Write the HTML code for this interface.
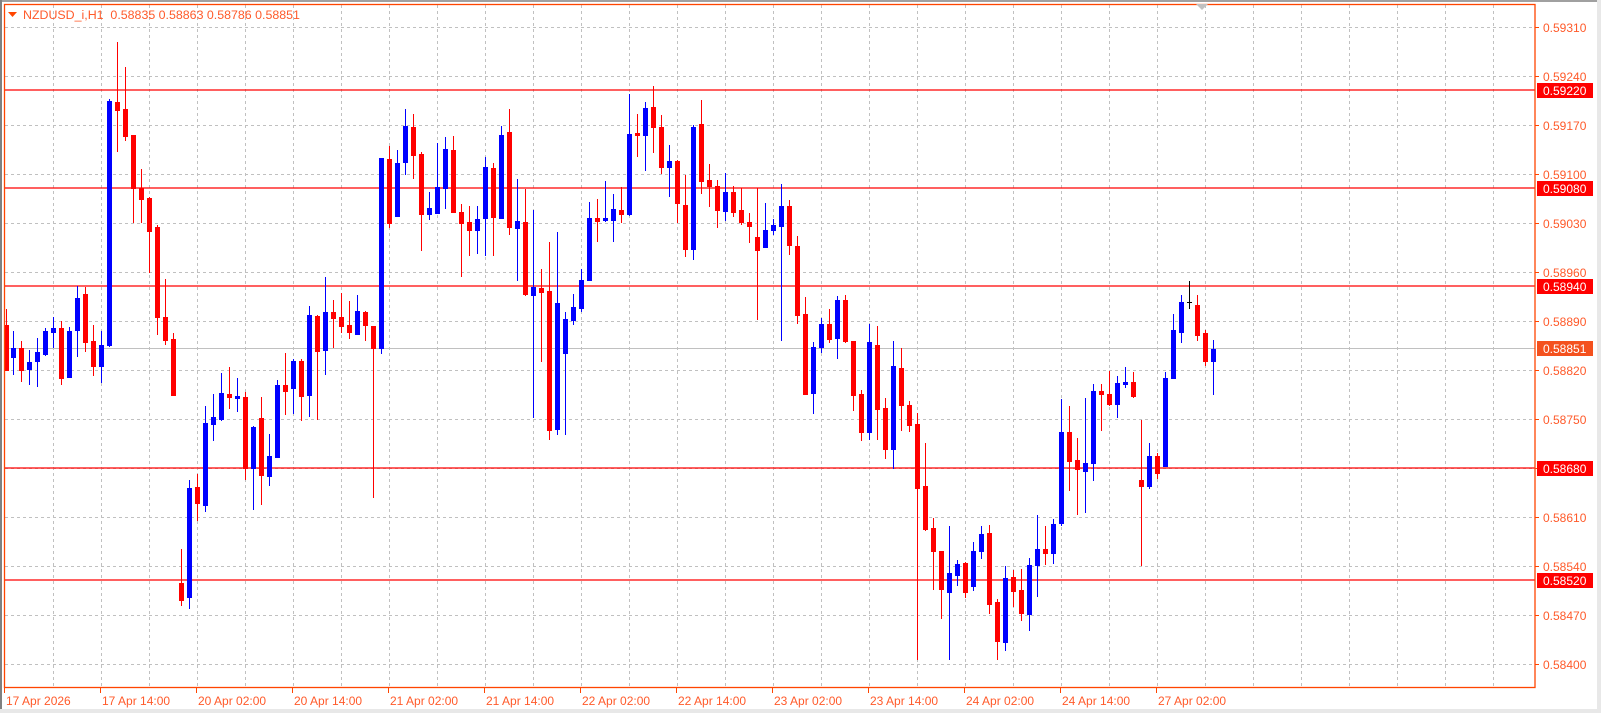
<!DOCTYPE html>
<html><head><meta charset="utf-8"><style>
html,body{margin:0;padding:0;background:#fff;width:1601px;height:713px;overflow:hidden}
svg{display:block}
text{font-family:"Liberation Sans",sans-serif;font-size:12px}
.hdr{white-space:pre;font-size:12.4px}
</style></head><body>
<svg id="c" width="1601" height="713" xmlns="http://www.w3.org/2000/svg">
<rect x="0" y="0" width="1601" height="713" fill="#fff"/>
<rect x="0" y="0" width="1601" height="2" fill="#a0a0a0"/>
<rect x="0" y="0" width="2" height="713" fill="#808080"/>
<rect x="1597" y="0" width="4" height="713" fill="#e8e8e8"/>
<rect x="0" y="709" width="1601" height="4" fill="#e8e8e8"/>
<g id="grid" stroke="#c0c0c0" stroke-width="1" stroke-dasharray="3,3"></g>
<line x1="5" y1="348.5" x2="1535" y2="348.5" stroke="#c0c0c0"/>
<g stroke="#ff0000" stroke-width="1.2">
<line x1="5" y1="90" x2="1535" y2="90"/>
<line x1="5" y1="188" x2="1535" y2="188"/>
<line x1="5" y1="286" x2="1535" y2="286"/>
<line x1="5" y1="468" x2="1535" y2="468"/>
<line x1="5" y1="580" x2="1535" y2="580"/>
</g>
<g id="candles"></g>
<rect x="4.5" y="4.5" width="1530.5" height="683" fill="none" stroke="#ff4500" stroke-width="1.3"/>
<polygon points="1196,4 1208,4 1202,10" fill="#c0c0c0"/>
<polygon points="8,12 17,12 12.5,17" fill="#ff4500"/>
<text class="hdr" x="23" y="19" fill="#ff5a2a" xml:space="preserve">NZDUSD_i,H1  0.58835 0.58863 0.58786 0.58851</text>
<g id="raxis" fill="#ff5a2a"></g>
<g id="baxis" fill="#ff5a2a"></g>
</svg>
<script>
var NS="http://www.w3.org/2000/svg";
function el(t,a,p,txt){var e=document.createElementNS(NS,t);for(var k in a)e.setAttribute(k,a[k]);if(txt)e.textContent=txt;p.appendChild(e);return e;}
var g=document.getElementById("grid");
for(var k=0;k<14;k++){var y=27+49*k+0.5;el("line",{x1:5,y1:y,x2:1535,y2:y},g);}
for(var k=0;k<=30;k++){var x=53+48*k+0.5;el("line",{x1:x,y1:5,x2:x,y2:687},g);}
var D=[
[6,309,370,325,370,'R'],[13,331,375,348,357,'B'],[21,341,382,348,370,'R'],[29,350,385,362,369,'B'],[37,338,387,352,361,'B'],[45,328,356,331,354,'B'],[53,317,348,328,332,'B'],[61,321,385,328,378,'R'],[69,327,377,331,377,'B'],[77,286,357,298,330,'B'],[85,287,352,294,342,'R'],[93,325,376,341,366,'R'],[101,331,383,345,366,'B'],[109,99,347,101,345,'B'],[117,42,152,102,110,'R'],[125,67,141,109,136,'R'],[133,135,223,135,188,'R'],[141,169,223,188,199,'R'],[149,197,273,198,231,'R'],[157,225,335,227,317,'R'],[165,279,345,317,340,'R'],[173,333,395,339,395,'R'],[181,549,606,583,600,'R'],[189,480,609,488,597,'B'],[197,474,521,487,503,'R'],
[205,406,512,423,505,'B'],[213,394,441,417,424,'B'],[221,373,421,393,419,'B'],[229,367,409,394,397,'R'],[237,378,412,396,398,'B'],[245,392,480,397,468,'R'],[253,426,510,427,468,'B'],[261,397,505,418,475,'R'],[269,434,486,456,476,'B'],[277,380,458,385,457,'B'],[285,353,415,385,391,'R'],[293,359,414,361,388,'B'],[301,359,421,361,396,'R'],[309,306,417,315,395,'B'],[317,315,420,316,351,'R'],[325,277,375,312,350,'B'],[333,300,348,312,318,'R'],[341,293,333,317,326,'R'],[349,301,339,325,332,'R'],[357,295,335,311,334,'B'],[365,311,341,312,325,'R'],[373,326,498,326,348,'R'],[381,158,354,158,348,'B'],[389,146,228,159,223,'R'],
[397,150,216,163,216,'B'],[405,109,175,126,162,'B'],[413,114,179,127,155,'R'],[421,152,251,154,214,'R'],[429,192,220,208,214,'B'],[437,143,213,187,213,'B'],[445,137,209,149,188,'B'],[453,136,213,150,212,'R'],[461,204,277,212,223,'R'],[469,206,256,222,230,'R'],[477,206,254,219,230,'B'],[485,157,256,167,218,'B'],[493,163,256,168,217,'R'],[501,126,218,135,218,'B'],[509,109,235,132,227,'R'],[517,179,281,221,228,'B'],[525,189,296,222,294,'R'],[533,210,418,287,295,'B'],[541,269,362,288,292,'R'],[549,242,440,291,430,'R'],[557,232,435,303,429,'B'],[565,312,435,319,353,'B'],[573,294,325,307,320,'B'],[581,269,312,280,308,'B'],
[589,202,281,218,280,'B'],[597,199,242,218,221,'R'],[605,181,222,218,220,'B'],[613,194,242,209,220,'B'],[621,187,223,210,214,'R'],[629,94,216,134,214,'B'],[637,114,157,133,135,'R'],[645,102,171,108,135,'B'],[653,86,153,107,127,'R'],[661,115,174,127,167,'R'],[669,145,197,161,167,'B'],[677,160,223,161,203,'R'],[685,175,257,205,249,'R'],[693,125,260,127,249,'B'],[701,100,194,124,181,'R'],[709,164,207,180,186,'R'],[717,180,228,186,210,'R'],[725,173,221,192,211,'B'],[733,186,217,192,212,'R'],
[741,188,225,210,222,'R'],[749,213,243,222,226,'R'],[757,188,320,237,250,'R'],[765,203,247,230,247,'B'],[773,219,235,225,230,'B'],[781,184,341,206,226,'B'],[789,200,255,206,245,'R'],[797,236,324,246,315,'R'],[805,297,395,314,394,'R'],[813,342,414,347,393,'B'],[821,318,353,324,347,'B'],[829,309,343,324,339,'R'],[837,296,359,300,338,'B'],
[845,295,343,300,341,'R'],[853,341,411,341,395,'R'],[861,390,441,394,432,'R'],[869,324,440,342,432,'B'],[877,326,440,345,409,'R'],[885,398,459,408,449,'R'],[893,341,469,366,449,'B'],[901,348,431,368,405,'R'],[909,401,432,405,425,'R'],[917,413,660,424,488,'R'],[925,443,531,486,529,'R'],[933,518,590,528,551,'R'],[941,551,619,551,589,'R'],[949,526,660,573,592,'B'],[957,560,586,564,575,'B'],[965,562,598,563,592,'R'],[973,542,591,551,586,'B'],
[981,526,559,534,551,'B'],[989,525,614,533,604,'R'],[997,599,660,602,641,'R'],[1005,566,651,578,642,'B'],[1013,570,607,577,591,'R'],[1021,569,621,590,613,'R'],[1029,558,631,565,614,'B'],[1037,515,597,549,565,'B'],[1045,526,565,549,553,'R'],[1053,519,564,524,553,'B'],[1061,399,526,432,523,'B'],[1069,406,491,432,461,'R'],[1077,438,515,460,469,'R'],[1085,398,513,463,471,'B'],[1093,384,481,391,463,'B'],[1101,384,431,391,394,'R'],[1109,371,406,394,404,'R'],[1117,376,418,383,404,'B'],[1125,367,388,382,384,'B'],[1133,372,398,382,396,'R'],[1141,420,566,480,486,'R'],[1149,443,489,456,486,'B'],[1157,453,479,456,473,'R'],[1165,372,466,378,466,'B'],[1173,314,378,330,378,'B'],[1181,295,343,302,332,'B'],[1189,281,309,302,304,'K'],[1197,295,341,305,335,'R'],[1205,330,366,333,361,'R'],[1213,340,395,349,361,'B']
];
var cg=document.getElementById("candles");
var col={R:"#ff0000",B:"#0000ff",K:"#000000"};
D.forEach(function(d){
 var c=col[d[5]];
 el("rect",{x:d[0],y:d[1],width:1,height:Math.max(1,d[2]-d[1]),fill:c},cg);
 if(d[5]=='K') el("rect",{x:d[0]-2,y:d[3],width:5,height:1,fill:c},cg);
 else el("rect",{x:d[0]-2,y:d[3],width:5,height:Math.max(2,d[4]-d[3]+1),fill:c},cg);
});
var ra=document.getElementById("raxis");
var prices=["0.59310","0.59240","0.59170","0.59100","0.59030","0.58960","0.58890","0.58820","0.58750","0.58680","0.58610","0.58540","0.58470","0.58400"];
prices.forEach(function(p,k){var y=27+49*k;
 el("rect",{x:1535,y:y,width:4,height:1,fill:"#ff4500"},ra);
 el("text",{x:1543,y:y+5},ra,p);});
[["0.59220",90],["0.59080",188],["0.58940",286],["0.58680",468],["0.58520",580]].forEach(function(a){
 el("rect",{x:1537,y:a[1]-7,width:56,height:15,fill:"#ff0000"},ra);
 el("text",{x:1543,y:a[1]+5,fill:"#ffffff"},ra,a[0]);});
el("rect",{x:1537,y:341,width:56,height:15,fill:"#f4511e"},ra);
el("text",{x:1543,y:353,fill:"#ffffff"},ra,"0.58851");
var ba=document.getElementById("baxis");
var tl=["17 Apr 2026","17 Apr 14:00","20 Apr 02:00","20 Apr 14:00","21 Apr 02:00","21 Apr 14:00","22 Apr 02:00","22 Apr 14:00","23 Apr 02:00","23 Apr 14:00","24 Apr 02:00","24 Apr 14:00","27 Apr 02:00"];
tl.forEach(function(t,k){var x=4+96*k;
 el("rect",{x:x,y:688,width:1,height:5,fill:"#ff4500"},ba);
 el("text",{x:x+2,y:705},ba,t);});
</script>
</body></html>
